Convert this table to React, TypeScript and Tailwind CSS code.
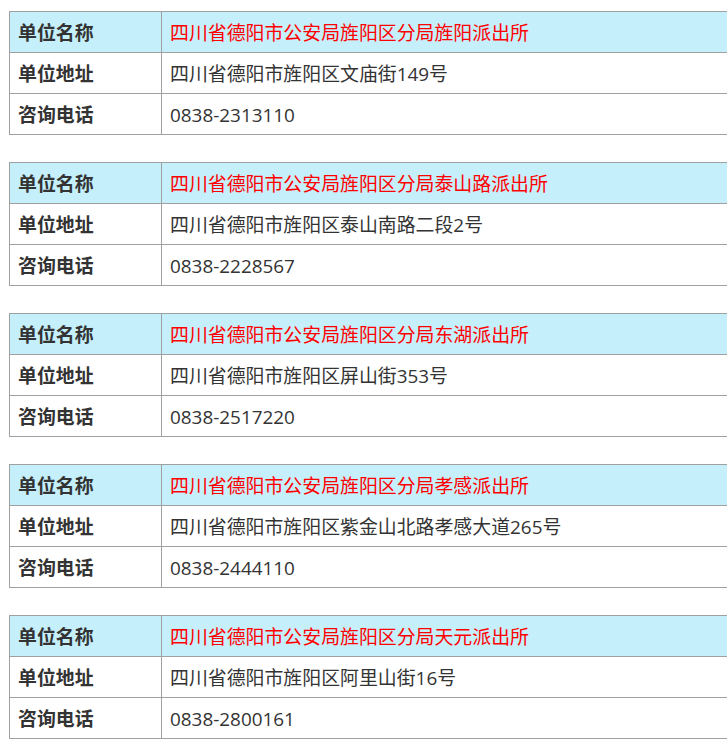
const stations = [
  { name: "四川省德阳市公安局旌阳区分局旌阳派出所", address: "四川省德阳市旌阳区文庙街149号", phone: "0838-2313110" },
  { name: "四川省德阳市公安局旌阳区分局泰山路派出所", address: "四川省德阳市旌阳区泰山南路二段2号", phone: "0838-2228567" },
  { name: "四川省德阳市公安局旌阳区分局东湖派出所", address: "四川省德阳市旌阳区屏山街353号", phone: "0838-2517220" },
  { name: "四川省德阳市公安局旌阳区分局孝感派出所", address: "四川省德阳市旌阳区紫金山北路孝感大道265号", phone: "0838-2444110" },
  { name: "四川省德阳市公安局旌阳区分局天元派出所", address: "四川省德阳市旌阳区阿里山街16号", phone: "0838-2800161" },
]

export default function App() {
  return (
    <div
      className="w-[727px] h-[747px] overflow-hidden bg-white pt-[11px] pl-[9px] text-[#333] text-[18.9px]"
      style={{ fontFamily: '"Open Sans", "Noto Sans CJK SC", sans-serif' }}
    >
      <div className="flex flex-col gap-[27px]">
        {stations.map((s) => (
          <table key={s.name} className="w-[760px] border-collapse">
            <tbody>
              <tr className="h-[41px] bg-[#c5effb]">
                <td className="w-[152px] border border-[#a0a0a0] pl-[8px] pt-[2px] font-bold">单位名称</td>
                <td className="border border-[#a0a0a0] pl-[8px] pt-[2px] text-[#ff0000]">{s.name}</td>
              </tr>
              <tr className="h-[41px]">
                <td className="border border-[#a0a0a0] pl-[8px] pt-[2px] font-bold">单位地址</td>
                <td className="border border-[#a0a0a0] pl-[8px] pt-[2px]">{s.address}</td>
              </tr>
              <tr className="h-[41px]">
                <td className="border border-[#a0a0a0] pl-[8px] pt-[2px] font-bold">咨询电话</td>
                <td className="border border-[#a0a0a0] pl-[8px] pt-[2px]">{s.phone}</td>
              </tr>
            </tbody>
          </table>
        ))}
      </div>
    </div>
  )
}
